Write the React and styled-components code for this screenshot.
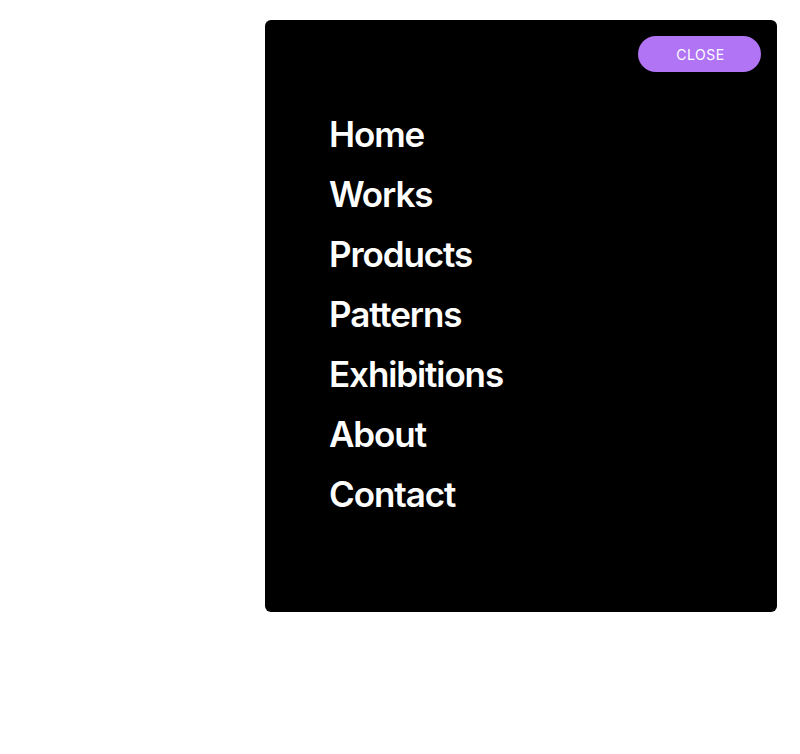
import React from "react";
import styled, { createGlobalStyle } from "styled-components";

const GlobalStyle = createGlobalStyle`
  body {
    margin: 0;
    background: #ffffff;
    font-family: Inter, "Noto Sans", sans-serif;
  }
`;

const items = ["Home", "Works", "Products", "Patterns", "Exhibitions", "About", "Contact"];

const App = () => {
    return (
        <Page>
            <GlobalStyle />
            <Panel>
                <TopBar>
                    <CloseButton>CLOSE</CloseButton>
                </TopBar>
                <Menu>
                    {items.map((item) => (
                        <MenuItem key={item}>
                            <MenuLink href="#">{item}</MenuLink>
                        </MenuItem>
                    ))}
                </Menu>
            </Panel>
        </Page>
    );
};

const Page = styled.div`
    display: flex;
    justify-content: flex-end;
    align-items: flex-start;
    padding: 20px 23px 0 0;
    min-height: 734px;
`;

const Panel = styled.nav`
    width: 512px;
    background: #000000;
    border-radius: 6px;
    padding: 16px 16px 88px 64px;
    box-sizing: border-box;
`;

const TopBar = styled.div`
    display: flex;
    justify-content: flex-end;
    margin-bottom: 32px;
`;

const CloseButton = styled.button`
    width: 123px;
    height: 36px;
    border: none;
    border-radius: 18px;
    background: #b074f5;
    color: #ffffff;
    font-family: Inter, "Noto Sans", sans-serif;
    font-size: 14px;
    letter-spacing: 0.5px;
    padding: 0 0 0 2px;
    cursor: pointer;
`;

const Menu = styled.ul`
    list-style: none;
    margin: 0;
    padding: 0;
`;

const MenuItem = styled.li`
    height: 60px;
    line-height: 60px;
`;

const MenuLink = styled.a`
    color: #ffffff;
    text-decoration: none;
    font-size: 35px;
    font-weight: 600;
    letter-spacing: -1.1px;
`;

export default App;
